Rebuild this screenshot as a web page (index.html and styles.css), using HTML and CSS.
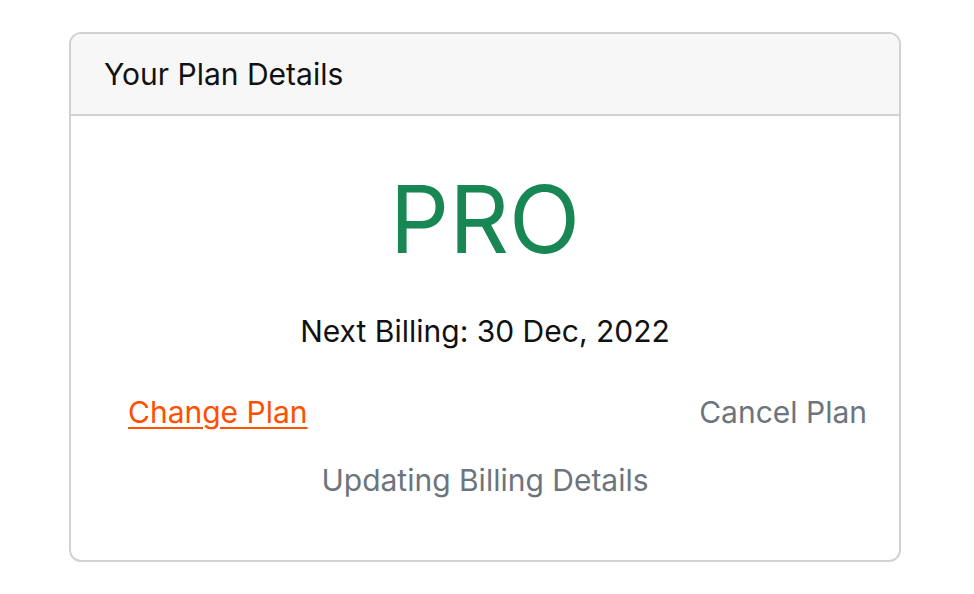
FILE: index.html
```html
<!DOCTYPE html>
<html>
<head>
<meta charset="utf-8">
<link rel="stylesheet" href="styles.css">
</head>
<body>
<div class="page">
  <div class="card">
    <div class="card-header">Your Plan Details</div>
    <div class="card-body">
      <div class="plan">PRO</div>
      <div class="billing">Next Billing: 30 Dec, 2022</div>
      <div class="actions">
        <a class="change" href="#">Change Plan</a>
        <span class="cancel">Cancel Plan</span>
      </div>
      <div class="update">Updating Billing Details</div>
    </div>
  </div>
</div>
</body>
</html>
```
FILE: styles.css
```css
html, body {
  margin: 0;
  padding: 0;
  background: #ffffff;
}
body {
  font-family: "Inter", "Noto Sans", sans-serif;
  color: #212529;
}
.page {
  padding: 32px 73px 0 69px;
}
.card {
  width: 832px;
  height: 530px;
  box-sizing: border-box;
  border: 2px solid #d2d2d2;
  border-radius: 12px;
  overflow: hidden;
  display: flex;
  flex-direction: column;
}
.card-header {
  height: 82px;
  box-sizing: border-box;
  background: #f7f7f7;
  border-bottom: 2px solid #d2d2d2;
  padding: 0 0 0 33px;
  display: flex;
  align-items: center;
  font-size: 30px;
  color: #111;
}
.card-body {
  display: flex;
  flex-direction: column;
  align-items: center;
}
.plan {
  margin-top: 57px;
  font-size: 93px;
  line-height: 1;
  color: #198754;
  font-weight: 400;
}
.billing {
  margin-top: 47px;
  font-size: 30px;
  color: #111;
}
.actions {
  margin-top: 45px;
  align-self: stretch;
  display: flex;
  justify-content: space-between;
  padding: 0 32px 0 57px;
  font-size: 30px;
}
.change {
  color: #ff4f00;
  text-decoration: underline;
  text-underline-offset: 4px;
  text-decoration-thickness: 2px;
}
.cancel {
  color: #6c757d;
}
.update {
  margin-top: 32px;
  font-size: 30px;
  color: #6c757d;
}
```
